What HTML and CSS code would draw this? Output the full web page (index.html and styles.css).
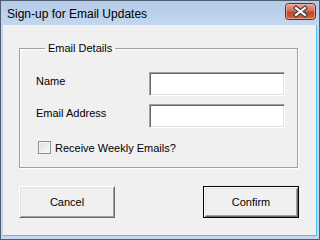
FILE: index.html
```html
<!DOCTYPE html>
<html lang="en">
<head>
    <meta charset="UTF-8">
    <title>Sign-up for Email Updates</title>
    <link rel="stylesheet" href="styles.css">
</head>
<body>
    <div class="window">
        <div class="titlebar">
            <span class="title">Sign-up for Email Updates</span>
            <button class="close" aria-label="Close">
                <svg width="31" height="17" viewBox="0 0 31 17">
                    <defs>
                        <linearGradient id="red" x1="0" y1="0" x2="0" y2="1">
                            <stop offset="0" stop-color="#e9a99a"/>
                            <stop offset="0.45" stop-color="#d16e58"/>
                            <stop offset="0.55" stop-color="#c0442c"/>
                            <stop offset="1" stop-color="#d8664a"/>
                        </linearGradient>
                    </defs>
                    <rect x="0.5" y="0.5" width="30" height="16" rx="3" fill="url(#red)" stroke="#6e2418"/>
                    <rect x="1.5" y="1.5" width="28" height="14" rx="2" fill="none" stroke="#f2c2b6" stroke-opacity="0.6"/>
                    <path d="M11 5 L20 12 M20 5 L11 12" stroke="#3c3c3c" stroke-width="4.2" stroke-linecap="square"/>
                    <path d="M11 5 L20 12 M20 5 L11 12" stroke="#ffffff" stroke-width="2.2" stroke-linecap="square"/>
                </svg>
            </button>
        </div>
        <div class="client">
            <fieldset class="group">
                <legend>Email Details</legend>
                <div class="fields">
                    <label for="name">Name</label>
                    <input id="name" type="text">
                    <label for="email">Email Address</label>
                    <input id="email" type="text">
                </div>
                <label class="check">
                    <span class="box"></span>
                    Receive Weekly Emails?
                </label>
            </fieldset>
            <div class="actions">
                <button class="btn">Cancel</button>
                <button class="btn default">Confirm</button>
            </div>
        </div>
    </div>
</body>
</html>
```

FILE: styles.css
```css
body {
    margin: 0;
    font-family: "Liberation Sans", Arial, sans-serif;
    font-size: 11px;
    color: #000;
}

.window {
    width: 320px;
    height: 240px;
    box-sizing: border-box;
    border: 1px solid #4e5d70;
    padding: 0 2px 3px 2px;
    background: linear-gradient(#b4cbe7 0, #c3d7ee 24px, #c3d7ee 100%);
    display: flex;
    flex-direction: column;
}

.titlebar {
    height: 24px;
    display: flex;
    align-items: center;
    justify-content: space-between;
    padding: 0 1px 0 4px;
}

.title {
    font-size: 12px;
    color: #000;
    padding-top: 1px;
}

.close {
    border: none;
    padding: 0;
    margin: 0;
    background: none;
    width: 31px;
    height: 17px;
    display: block;
    margin-top: -3px;
}

.close svg {
    display: block;
}

.client {
    flex: 1;
    background: #f0f0f0;
    border-right: 1px solid #46c3f2;
    border-bottom: 1px solid #46c3f2;
    padding: 17px 0 0 16px;
}

.group {
    width: 279px;
    height: 126px;
    box-sizing: border-box;
    margin: 0;
    padding: 18px 0 0 16px;
    border: 1px solid #a0a0a0;
    box-shadow: 1px 1px 0 #fff, inset 1px 1px 0 #fff;
}

.group legend {
    padding: 0 3px;
    margin-left: 9px;
}

.fields {
    display: grid;
    grid-template-columns: 113px 136px;
    row-gap: 8px;
    align-items: center;
}

.fields label {
    margin-top: -6px;
}

.fields input {
    width: 136px;
    height: 24px;
    box-sizing: border-box;
    margin: 0;
    border: 1px solid;
    border-color: #a0a0a0 #fff #fff #a0a0a0;
    box-shadow: inset 1px 1px 0 #696969, inset -1px -1px 0 #e3e3e3;
    background: #fff;
}

.check {
    display: flex;
    align-items: center;
    gap: 4px;
    margin: 13px 0 0 2px;
}

.box {
    width: 13px;
    height: 13px;
    box-sizing: border-box;
    border: 1px solid #8e8f8f;
    background: linear-gradient(135deg, #dcdcdc, #fbfbfb);
    box-shadow: inset 0 0 0 1px #f4f4f4;
}

.actions {
    width: 280px;
    display: flex;
    justify-content: space-between;
    margin-top: 18px;
}

.btn {
    width: 96px;
    height: 32px;
    box-sizing: border-box;
    margin: 0;
    padding: 0;
    font-family: "Liberation Sans", Arial, sans-serif;
    font-size: 11px;
    color: #000;
    background: #f0f0f0;
    border: 1px solid;
    border-color: #fff #696969 #696969 #fff;
    box-shadow: inset 1px 1px 0 #e3e3e3, inset -1px -1px 0 #a0a0a0;
}

.btn.default {
    border: 1px solid #000;
    box-shadow: inset 1px 1px 0 #fff, inset -1px -1px 0 #696969, inset 2px 2px 0 #e3e3e3, inset -2px -2px 0 #a0a0a0;
}
```
